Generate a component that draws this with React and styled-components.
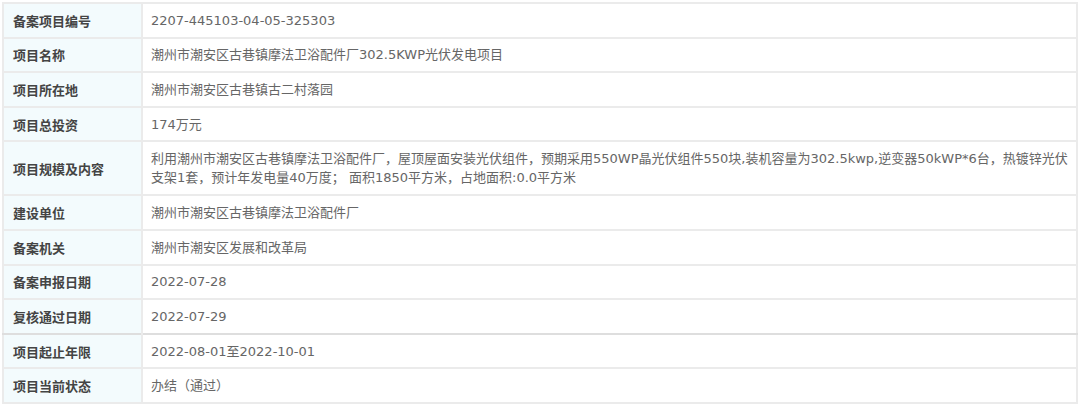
import React from "react";
import styled, { createGlobalStyle } from "styled-components";

const GlobalStyle = createGlobalStyle`
  html, body {
    margin: 0;
    padding: 0;
    background: #ffffff;
  }
  body {
    font-family: "DejaVu Sans", "Noto Sans CJK SC", sans-serif;
  }
`;

const Page = styled.div`
  padding: 2px 2px 0 2px;
`;

const Table = styled.table`
  width: 1076px;
  border-collapse: collapse;
  border: 2px solid #ebebeb;
  font-size: 13px;
`;

const Row = styled.tr`
  height: ${(p) => (p.$tall ? "54px" : "34.6px")};
  border-top: ${(p) => (p.$strong ? "2px solid #dedede" : "2px solid #ebebeb")};
`;

const Label = styled.th`
  width: 128px;
  padding: 0 0 0 9px;
  background: #f3fbfd;
  border-right: 2px solid #ebebeb;
  color: #444;
  font-weight: bold;
  text-align: left;
  white-space: nowrap;
`;

const Value = styled.td`
  padding: 0 8px;
  color: #666;
  line-height: 19px;
`;

const rows = [
  { label: "备案项目编号", value: "2207-445103-04-05-325303" },
  { label: "项目名称", value: "潮州市潮安区古巷镇摩法卫浴配件厂302.5KWP光伏发电项目" },
  { label: "项目所在地", value: "潮州市潮安区古巷镇古二村落园" },
  { label: "项目总投资", value: "174万元" },
  {
    label: "项目规模及内容",
    tall: true,
    value:
      "利用潮州市潮安区古巷镇摩法卫浴配件厂，屋顶屋面安装光伏组件，预期采用550WP晶光伏组件550块,装机容量为302.5kwp,逆变器50kWP*6台，热镀锌光伏支架1套，预计年发电量40万度； 面积1850平方米，占地面积:0.0平方米",
  },
  { label: "建设单位", value: "潮州市潮安区古巷镇摩法卫浴配件厂" },
  { label: "备案机关", value: "潮州市潮安区发展和改革局" },
  { label: "备案申报日期", value: "2022-07-28" },
  { label: "复核通过日期", value: "2022-07-29" },
  { label: "项目起止年限", value: "2022-08-01至2022-10-01", strong: true },
  { label: "项目当前状态", value: "办结（通过）" },
];

const App = () => {
  return (
    <Page>
      <GlobalStyle />
      <Table>
        <tbody>
          {rows.map((r, i) => (
            <Row key={i} $tall={r.tall} $strong={r.strong}>
              <Label>{r.label}</Label>
              <Value>{r.value}</Value>
            </Row>
          ))}
        </tbody>
      </Table>
    </Page>
  );
};

export default App;
